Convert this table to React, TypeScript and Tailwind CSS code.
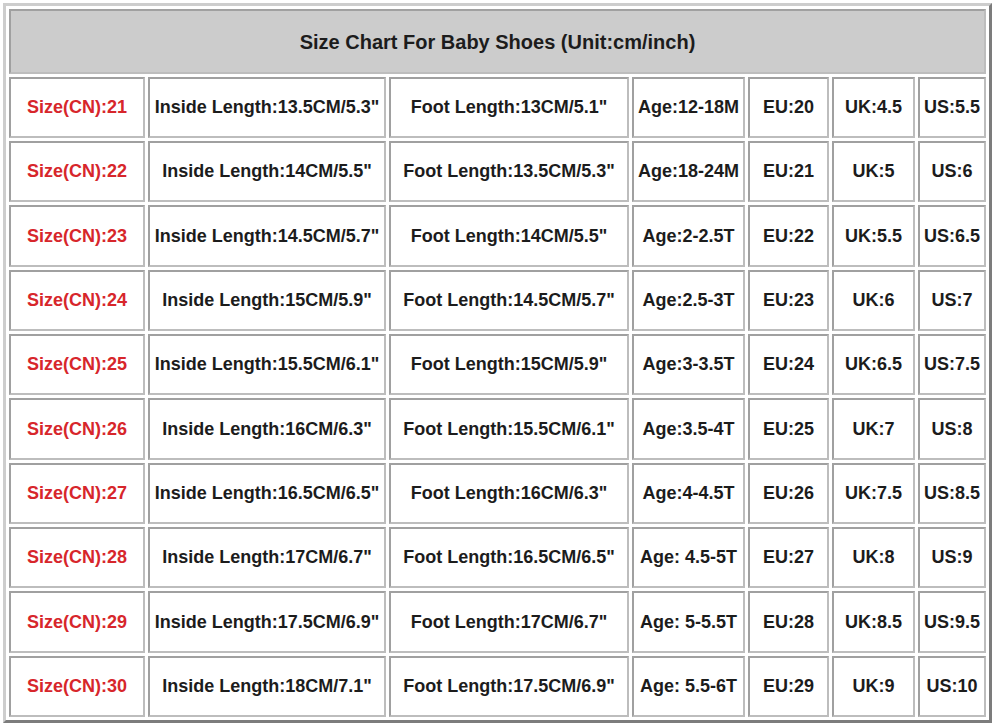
import React from "react";

const rows = [
  ["21", "13.5CM/5.3\"", "13CM/5.1\"", "Age:12-18M", "EU:20", "UK:4.5", "US:5.5"],
  ["22", "14CM/5.5\"", "13.5CM/5.3\"", "Age:18-24M", "EU:21", "UK:5", "US:6"],
  ["23", "14.5CM/5.7\"", "14CM/5.5\"", "Age:2-2.5T", "EU:22", "UK:5.5", "US:6.5"],
  ["24", "15CM/5.9\"", "14.5CM/5.7\"", "Age:2.5-3T", "EU:23", "UK:6", "US:7"],
  ["25", "15.5CM/6.1\"", "15CM/5.9\"", "Age:3-3.5T", "EU:24", "UK:6.5", "US:7.5"],
  ["26", "16CM/6.3\"", "15.5CM/6.1\"", "Age:3.5-4T", "EU:25", "UK:7", "US:8"],
  ["27", "16.5CM/6.5\"", "16CM/6.3\"", "Age:4-4.5T", "EU:26", "UK:7.5", "US:8.5"],
  ["28", "17CM/6.7\"", "16.5CM/6.5\"", "Age: 4.5-5T", "EU:27", "UK:8", "US:9"],
  ["29", "17.5CM/6.9\"", "17CM/6.7\"", "Age: 5-5.5T", "EU:28", "UK:8.5", "US:9.5"],
  ["30", "18CM/7.1\"", "17.5CM/6.9\"", "Age: 5.5-6T", "EU:29", "UK:9", "US:10"],
];

const heights = [61, 61, 62, 61, 61, 62, 61, 61, 62, 61];

const cell =
  "p-0 text-center align-middle whitespace-nowrap border-2 border-t-[#a0a0a0] border-l-[#a0a0a0] border-b-[#bdbdbd] border-r-[#bdbdbd]";

export default function App() {
  return (
    <div className="w-[997px] h-[726px] bg-white p-[3px] font-['Liberation_Sans',Arial,sans-serif] font-bold text-[18px] text-[#1c1c1c]">
      <table className="border-separate border-spacing-[3px] w-[989px] table-fixed border-[3px] border-t-[#cdcdcd] border-l-[#cdcdcd] border-b-[#7c7c7c] border-r-[#7c7c7c] bg-white">
        <colgroup>
          <col className="w-[136px]" />
          <col className="w-[238px]" />
          <col className="w-[240px]" />
          <col className="w-[113px]" />
          <col className="w-[81px]" />
          <col className="w-[83px]" />
          <col className="w-[68px]" />
        </colgroup>
        <thead>
          <tr className="h-[65px]">
            <th colSpan={7} className={`${cell} bg-[#cccccc] font-bold text-[20px]`}>
              Size Chart For Baby Shoes (Unit:cm/inch)
            </th>
          </tr>
        </thead>
        <tbody>
          {rows.map((r, i) => (
            <tr key={r[0]} style={{ height: heights[i] }}>
              <td className={`${cell} text-[#d7262b]`}>Size(CN):{r[0]}</td>
              <td className={cell}>Inside Length:{r[1]}</td>
              <td className={cell}>Foot Length:{r[2]}</td>
              <td className={cell}>{r[3]}</td>
              <td className={cell}>{r[4]}</td>
              <td className={cell}>{r[5]}</td>
              <td className={cell}>{r[6]}</td>
            </tr>
          ))}
        </tbody>
      </table>
    </div>
  );
}
